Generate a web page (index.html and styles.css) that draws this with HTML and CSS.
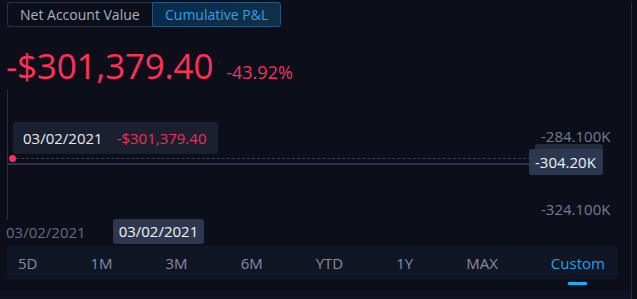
FILE: index.html
```html
<!DOCTYPE html>
<html>
<head>
<meta charset="utf-8">
<link rel="stylesheet" href="styles.css">
</head>
<body>
<div class="panel">
  <div class="toggle">
    <div class="tab">Net Account Value</div>
    <div class="tab active">Cumulative P&amp;L</div>
  </div>
  <div class="headline">
    <span class="big">-$301,379.40</span>
    <span class="pct">-43.92%</span>
  </div>
  <div class="chart">
    <div class="axis"></div>
    <div class="tip"><span class="tdate">03/02/2021</span><span class="tval">-$301,379.40</span></div>
    <div class="dot"></div>
    <div class="dash"></div>
    <div class="line"></div>
    <div class="ylabel y1">-284.100K</div>
    <div class="ylabel y2">-324.100K</div>
    <div class="ybadge-back"></div>
    <div class="ybadge">-304.20K</div>
  </div>
  <div class="xrow">
    <span class="xlabel">03/02/2021</span>
    <span class="xbadge">03/02/2021</span>
  </div>
  <div class="ranges">
    <span class="r">5D</span>
    <span class="r">1M</span>
    <span class="r">3M</span>
    <span class="r">6M</span>
    <span class="r">YTD</span>
    <span class="r">1Y</span>
    <span class="r">MAX</span>
    <span class="r sel">Custom</span>
  </div>
  <div class="foot"></div>
</div>
</body>
</html>
```
FILE: styles.css
```css
html, body {
  margin: 0;
  padding: 0;
  background: #0c0f1a;
  font-family: "Open Sans", "Noto Sans", sans-serif;
  width: 637px;
  height: 299px;
  overflow: hidden;
}
.panel {
  position: relative;
  width: 631px;
  height: 299px;
  border-right: 1px solid #262b3a;
  box-sizing: content-box;
}
.toggle {
  display: flex;
  margin: 2px 0 0 7px;
  height: 25px;
}
.tab {
  box-sizing: border-box;
  height: 25px;
  line-height: 23px;
  font-size: 14px;
  color: #a9b1c2;
  border: 1px solid #2b3242;
  border-right: none;
  border-radius: 3px 0 0 3px;
  padding: 0 0 0 12px;
  width: 145px;
}
.tab.active {
  width: 129px;
  color: #2ea3e3;
  border: 1px solid #1f5a86;
  border-radius: 0 3px 3px 0;
  background: linear-gradient(90deg, #0b2b4c, #0f2f48);
  padding: 0 0 0 12px;
}
.headline {
  display: flex;
  align-items: baseline;
  margin: 17px 0 0 6px;
  height: 44px;
}
.big {
  font-size: 35px;
  color: #ff2f5a;
  letter-spacing: -0.2px;
  line-height: 44px;
}
.pct {
  font-size: 18px;
  color: #f0335c;
  margin-left: 13px;
}
.chart {
  position: relative;
  height: 130px;
}
.axis {
  position: absolute;
  left: 7px;
  top: 2px;
  width: 1px;
  height: 130px;
  background: #2a3042;
}
.tip {
  position: absolute;
  left: 13px;
  top: 34px;
  width: 205px;
  height: 32px;
  background: #1b2030;
  border-radius: 3px;
  display: flex;
  align-items: center;
  font-size: 15px;
  padding-left: 10px;
  box-sizing: border-box;
}
.tdate { color: #e8ebf2; }
.tval { color: #ee2f59; margin-left: 14px; }
.dot {
  position: absolute;
  left: 9px;
  top: 67px;
  width: 7px;
  height: 7px;
  border-radius: 50%;
  background: #ff2f5a;
}
.dash {
  position: absolute;
  left: 16px;
  top: 70px;
  width: 515px;
  border-top: 1px dashed #3c4256;
}
.line {
  position: absolute;
  left: 7px;
  top: 75px;
  width: 524px;
  height: 2px;
  background: #2c3550;
}
.ylabel {
  position: absolute;
  left: 541px;
  font-size: 15px;
  color: #767c8e;
}
.y1 { top: 38px; }
.y2 { top: 111px; }
.ybadge-back {
  position: absolute;
  left: 535px;
  top: 56px;
  width: 68px;
  height: 18px;
  background: #242b3d;
  border-radius: 3px;
}
.ybadge {
  position: absolute;
  left: 529px;
  top: 61px;
  width: 74px;
  height: 26px;
  line-height: 26px;
  background: #2d3850;
  border-radius: 3px;
  font-size: 15px;
  color: #eef1f6;
  padding-left: 6px;
  box-sizing: border-box;
  white-space: nowrap;
}
.xrow {
  display: flex;
  align-items: center;
  height: 25px;
  margin-top: 1px;
}
.xlabel {
  font-size: 15px;
  color: #666c80;
  margin-left: 6px;
}
.xbadge {
  margin-left: 27px;
  height: 25px;
  line-height: 25px;
  background: #2d374f;
  border-radius: 3px;
  padding: 0 6px 0 6px;
  font-size: 15px;
  color: #f2f4f8;
}
.ranges {
  margin: 2px 0 0 7px;
  width: 611px;
  height: 33px;
  background: #111625;
  border-radius: 3px;
  display: flex;
  justify-content: space-between;
  align-items: center;
  padding: 0 13px 0 11px;
  box-sizing: border-box;
}
.r {
  position: relative;
  font-size: 15px;
  color: #858da2;
}
.r.sel { color: #1fa4e6; }
.r.sel::after {
  content: "";
  position: absolute;
  left: 17px;
  top: 29px;
  width: 19px;
  height: 3px;
  border-radius: 1px;
  background: #14b2f5;
}
.foot {
  margin-top: 12px;
  height: 12px;
  background: #0f1321;
}
```
